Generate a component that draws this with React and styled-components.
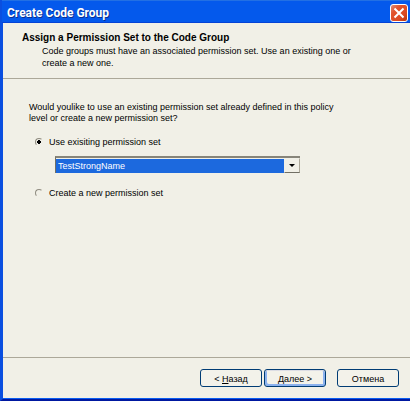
import { useState } from 'react';
import styled, { createGlobalStyle } from 'styled-components';

const GlobalStyle = createGlobalStyle`
  body {
    margin: 0;
  }

  * {
    box-sizing: border-box;
  }
`;

const Window = styled.form`
  display: flex;
  flex-direction: column;
  min-height: 100vh;
  background: #f1f0e7;
  border-left: 3px solid #0a4fe0;
  border-bottom: 2px solid #0018a0;
  box-shadow: inset 0 -1px 0 #0a5cf0;
  font-family: "Liberation Sans", Arial, sans-serif;
  font-size: 9px;
  line-height: 11px;
  color: #000;
`;

const TitleBar = styled.div`
  display: flex;
  align-items: center;
  justify-content: space-between;
  height: 23px;
  padding: 2px 2px 0 5px;
  margin-left: -1px;
  background: #0459ec;
  border-top: 1px solid #2270e4;
  border-bottom: 1px solid #0543d6;
`;

const Title = styled.h1`
  margin: 0;
  font-family: Roboto, sans-serif;
  font-size: 12px;
  font-weight: 700;
  line-height: 18px;
  color: #fff;
  text-shadow: 1px 1px 0 #0a2f8f;
`;

const CloseButton = styled.button`
  display: flex;
  align-items: center;
  justify-content: center;
  width: 18px;
  height: 18px;
  padding: 0;
  border: 1px solid #fff;
  border-radius: 3px;
  background: linear-gradient(135deg, #d98e7c 0%, #e2532c 30%, #dc4a22 70%, #b93408 100%);
`;

const Header = styled.header`
  height: 56px;
  padding: 9px 19px;
  border-bottom: 1px solid #aca899;
`;

const Heading = styled.h2`
  margin: 0 0 1px;
  font-size: 10px;
  font-weight: 700;
  line-height: 12px;
`;

const Description = styled.p`
  margin: 0;
  padding: 0 20px;
  line-height: 12px;
`;

const Content = styled.main`
  flex: 1;
  padding: 23px 26px;
`;

const Question = styled.p`
  margin: 0;
`;

const Option = styled.label`
  display: flex;
  align-items: center;
  gap: 6px;
  width: max-content;
  height: 12px;
  margin: ${props => props.$top}px 0 0 6px;
`;

const Radio = styled.input`
  appearance: none;
  width: 8px;
  height: 8px;
  margin: 0;
  border: 1px solid;
  border-color: #8f8c80 #f1f0e7 #f1f0e7 #8f8c80;
  border-radius: 50%;

  &:checked {
    background: radial-gradient(circle, #000 0 2px, transparent 2px);
  }
`;

const Combo = styled.div`
  position: relative;
  width: 245px;
  margin: 8px 0 0 26px;
`;

const Select = styled.select`
  appearance: none;
  display: block;
  width: 100%;
  height: 17px;
  padding: 1px 18px 0 2px;
  border: 0;
  border-radius: 0;
  border-left: 1px solid #716f64;
  border-top: 2px solid #87857a;
  background: #1c69de;
  box-shadow: inset 0 1px 0 #f1f0e7;
  color: #fff;
  font: inherit;
  outline: 0;
`;

const Arrow = styled.span`
  position: absolute;
  top: 2px;
  right: 0;
  display: flex;
  align-items: center;
  justify-content: center;
  width: 16px;
  height: 15px;
  border: 1px solid #f1f0e7;
  border-right-color: #aca899;
  border-bottom-color: #716f64;
  background: #f1f0e7;
  pointer-events: none;
`;

const Footer = styled.footer`
  display: flex;
  justify-content: flex-end;
  gap: 2px;
  padding: 11px 11px 12px;
  border-top: 1px solid #aca899;
`;

const Button = styled.button`
  width: 62px;
  height: 18px;
  padding: 2px 0 0;
  margin-left: ${props => (props.$apart ? 9 : 0)}px;
  border: 1px solid #003c74;
  border-radius: 3px;
  background: #f3f2ea;
  box-shadow: ${props =>
    props.$primary ? 'inset 0 1px 0 #dcdde4, inset 2px -2px 0 #8cb2ee, inset -2px 0 0 #8cb2ee' : 'none'};
  color: #000;
  font: inherit;
`;

function App() {
  const [mode, setMode] = useState('existing');

  return (
    <>
      <GlobalStyle />
      <Window onSubmit={e => e.preventDefault()}>
        <TitleBar>
          <Title>Create Code Group</Title>
          <CloseButton type="button" aria-label="Close">
            <svg width="12" height="12" viewBox="0 0 12 12">
              <path d="M1.5 1.5L10.5 10.5M10.5 1.5L1.5 10.5" stroke="#fff" strokeWidth="2" />
            </svg>
          </CloseButton>
        </TitleBar>
        <Header>
          <Heading>Assign a Permission Set to the Code Group</Heading>
          <Description>
            Code groups must have an associated permission set. Use an existing one or
            <br />
            create a new one.
          </Description>
        </Header>
        <Content>
          <Question>
            Would youlike to use an existing permission set already defined in this policy
            <br />
            level or create a new permission set?
          </Question>
          <Option $top={12}>
            <Radio type="radio" name="mode" checked={mode === 'existing'} onChange={() => setMode('existing')} />
            Use exisiting permission set
          </Option>
          <Combo>
            <Select aria-label="Permission set">
              <option>TestStrongName</option>
            </Select>
            <Arrow>
              <svg width="6" height="3" viewBox="0 0 6 3">
                <path d="M0 0H6L3 3Z" fill="#000" />
              </svg>
            </Arrow>
          </Combo>
          <Option $top={14}>
            <Radio type="radio" name="mode" checked={mode === 'new'} onChange={() => setMode('new')} />
            Create a new permission set
          </Option>
        </Content>
        <Footer>
          <Button type="button">&lt; <u>Н</u>азад</Button>
          <Button type="submit" $primary><u>Д</u>алее &gt;</Button>
          <Button type="button" $apart>Отмена</Button>
        </Footer>
      </Window>
    </>
  );
}

export default App;
